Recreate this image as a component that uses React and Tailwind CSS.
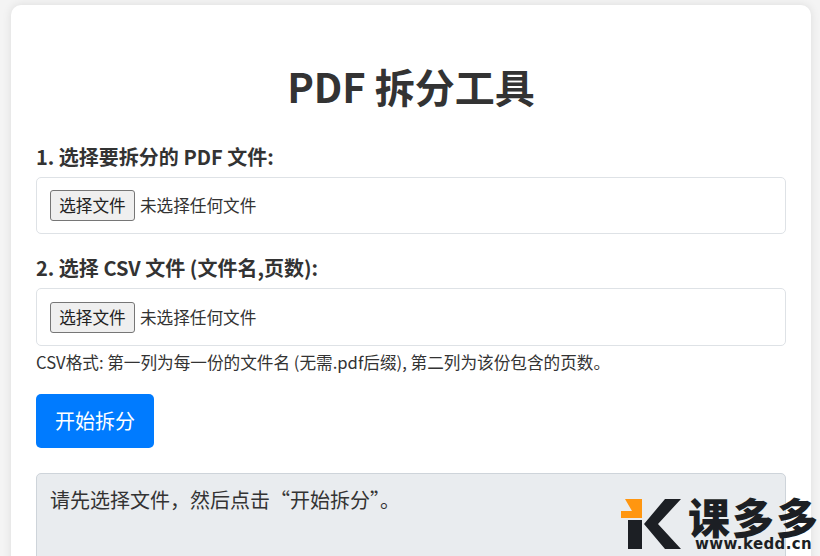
const font = { fontFamily: '"Noto Sans CJK SC", sans-serif' };

function FileBox({ h }) {
  return (
    <div className={`flex items-center gap-[5px] border border-[#dee2e6] rounded-[5px] bg-white px-[13px] ${h}`}>
      <button className="h-[31px] w-[85px] shrink-0 rounded-[3px] border border-[#767676] bg-[#efefef] text-[16.64px] leading-none text-[#222]">选择文件</button>
      <span className="text-[16.64px] text-[#333]">未选择任何文件</span>
    </div>
  );
}

export default function App() {
  return (
    <div style={font} className="relative h-[556px] w-[820px] overflow-hidden bg-[#f4f4f4] text-[#333]">
      <div className="ml-[11px] mt-[5px] h-[700px] w-[800px] rounded-[10px] bg-white px-[25px] shadow-[0_0_10px_rgba(0,0,0,0.1)]">
        <h1 className="pt-[52px] text-center text-[40px] font-bold leading-[58px] text-[#333]">PDF 拆分工具</h1>
        <label className="mt-[27px] block text-[20px] font-bold leading-[29px]">1. 选择要拆分的 PDF 文件:</label>
        <div className="mt-[6px]"><FileBox h="h-[57px]" /></div>
        <label className="mt-[19px] block text-[20px] font-bold leading-[29px]">2. 选择 CSV 文件 (文件名,页数):</label>
        <div className="mt-[6px]"><FileBox h="h-[58px]" /></div>
        <p className="mt-[4px] text-[16.64px] leading-[24px] text-[#333]">CSV格式: 第一列为每一份的文件名 (无需.pdf后缀), 第二列为该份包含的页数。</p>
        <button className="mt-[20px] block h-[54px] w-[118px] rounded-[5px] bg-[#007bff] text-[20px] text-white">开始拆分</button>
        <div className="mt-[25px] h-[200px] rounded-[5px] border border-[#ced4da] bg-[#e9ecef] px-[13px] py-[11px] text-[20px] leading-[29px] text-[#333]">请先选择文件，然后点击“开始拆分”。</div>
      </div>
      <div className="absolute left-[621px] top-[498px] flex h-[54px] w-[199px] text-[#1c1f24]">
        <svg viewBox="0 0 62 52" className="h-[52px] w-[62px] shrink-0">
          <path d="M4 1h17v19H0v-7h11z" fill="#ff9610" />
          <rect x="7" y="22" width="14" height="29" fill="#1c1f24" />
          <path d="M44 1h16L37 26l23 25H44L23 26z" fill="#1c1f24" />
        </svg>
        <div className="ml-[5px] flex flex-col">
          <span className="h-[39px] text-[42px] font-black leading-[36px] tracking-[2px]">课多多</span>
          <span style={{ fontFamily: '"DejaVu Sans", sans-serif' }} className="ml-[7px] text-[15px] font-bold leading-[16px] tracking-[0.4px]">www.kedd.cn</span>
        </div>
      </div>
    </div>
  );
}
